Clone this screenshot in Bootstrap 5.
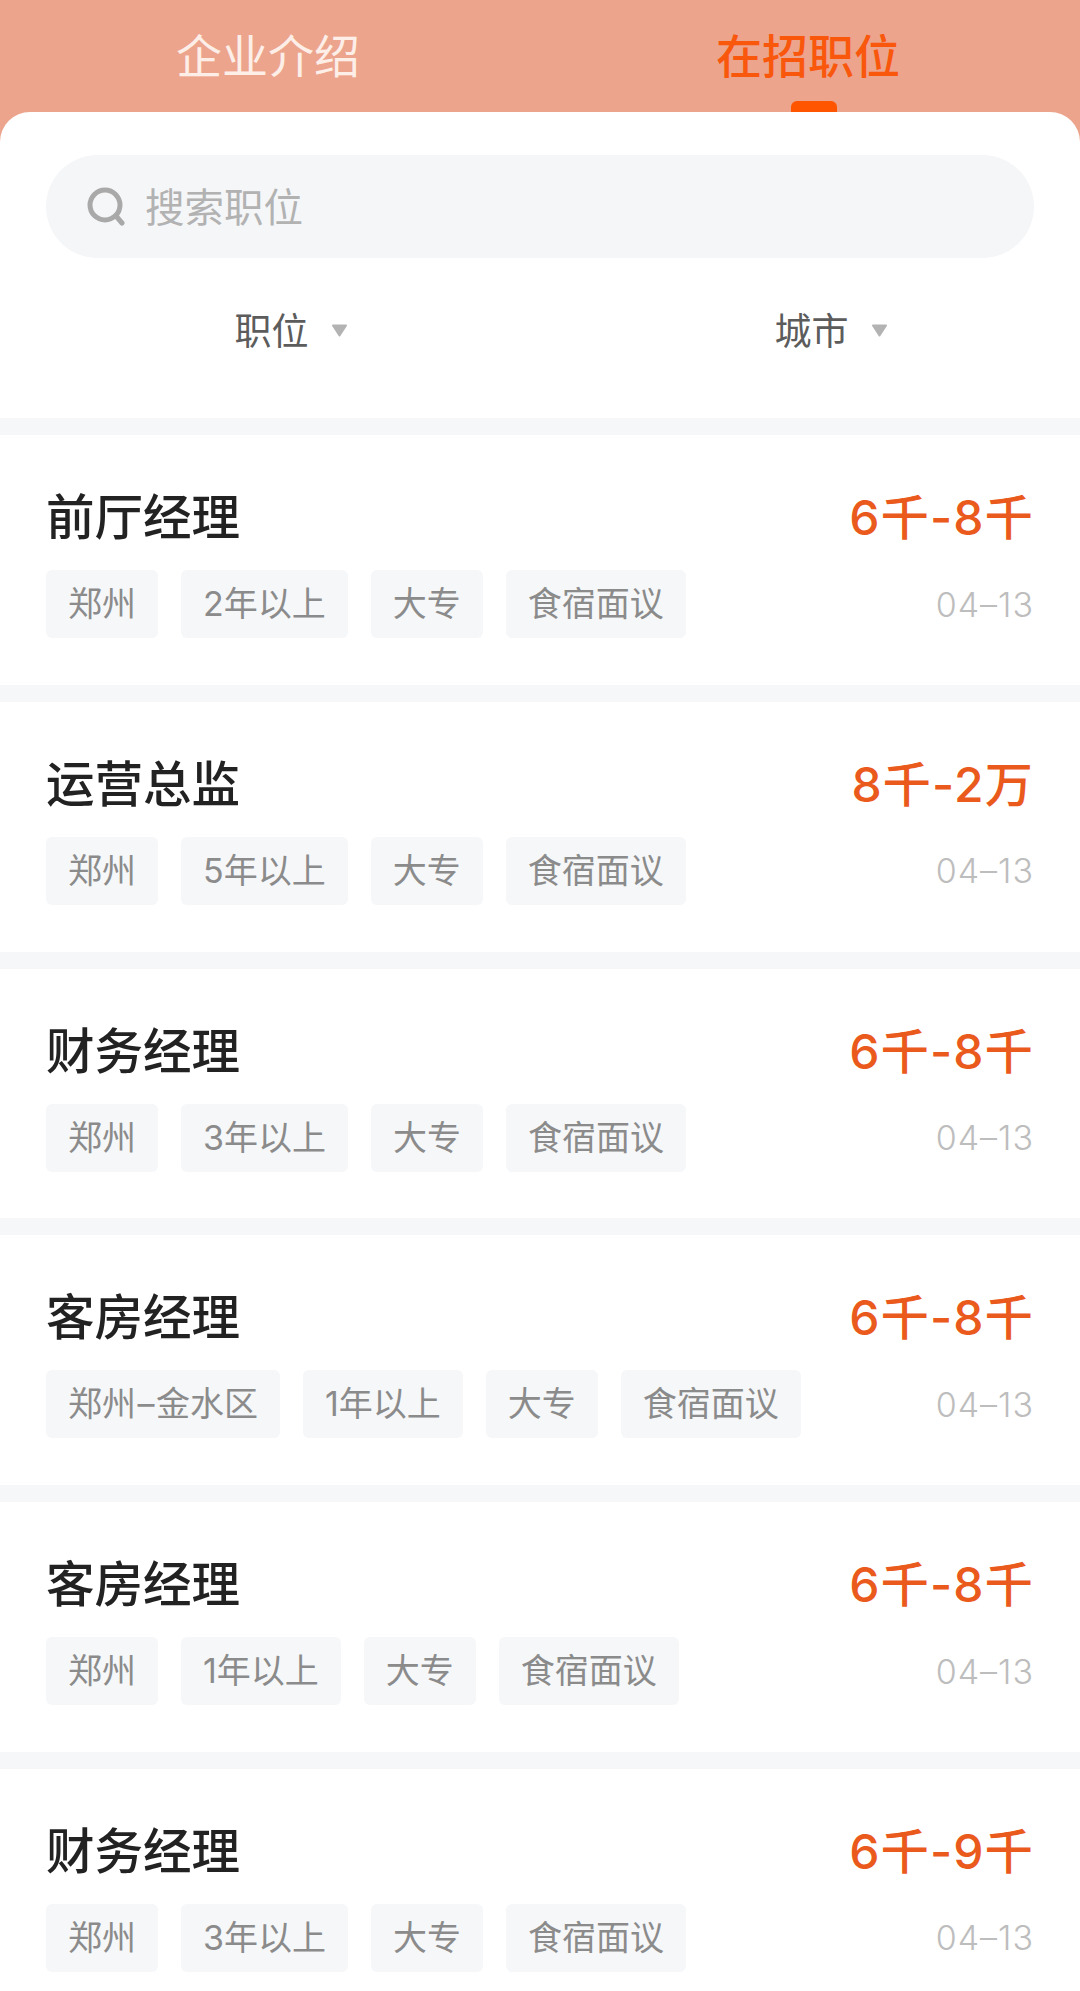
<!DOCTYPE html>
<html lang="zh">
<head>
<meta charset="utf-8">
<title>在招职位</title>
<link rel="stylesheet" href="https://cdn.jsdelivr.net/npm/bootstrap@5.3.0/dist/css/bootstrap.min.css">
<style>
html, body { height: 1991px; overflow: hidden; }
body { font-family: Inter, "Noto Sans CJK SC", sans-serif; background: #eca48c; }
.top-tabs { height: 112px; background: #eca48c; }
.tab-item { width: 540px; height: 112px; font-size: 46px; line-height: 113px; color: #fdeee8; text-align: center; position: relative; }
.tab-first { padding-right: 4px; }
.tab-on { color: #f9570c; font-weight: 500; padding-right: 4px; }
.tab-bar { position: absolute; left: 251px; bottom: 0; width: 46px; height: 11px; border-radius: 6px 6px 0 0; background: #ff5500; }
.sheet { background: #fff; border-radius: 30px 30px 0 0; height: 1879px; overflow: hidden; }
.head-zone { height: 306px; padding: 43px 46px 0; }
.search-pill { height: 103px; background: #f5f6f8; border-radius: 52px; padding-left: 41px; color: #b2b2b2; font-size: 39.5px; gap: 20px; }
.search-word { padding-top: 4px; }
.filter-row { height: 145px; margin: 0 -46px; }
.filter-col { width: 540px; padding-left: 42px; color: #5c5c5c; font-size: 37px; gap: 22px; }
.filter-word { padding-top: 2px; }
.caret-mark { width: 17px; height: 13px; }
.job-row { height: 266.8px; padding: 47px 46px 0; border-top: 17px solid #f6f7f9; background: #fff; box-sizing: border-box; }
.job-head { height: 68px; }
.job-name { font-size: 48.5px; line-height: 72px; height: 68px; color: #222; font-weight: 500; }
.job-pay { font-size: 48px; line-height: 72px; height: 68px; color: #ea5a1d; font-weight: 500; letter-spacing: 1.2px; }
.job-foot { margin-top: 20px; height: 68px; }
.chip-line { gap: 23px; }
.chip { height: 68px; line-height: 68px; padding: 0 22px; background: #f6f7f9; border-radius: 6px; color: #8b8b8b; font-size: 34px; white-space: nowrap; }
.chip-dash { padding: 0 1.5px; }
.job-date { color: #bdbdbd; font-size: 34px; font-weight: 300; letter-spacing: 1px; }
</style>
</head>
<body>
<div class="top-tabs d-flex">
  <div class="tab-item tab-first">企业介绍</div>
  <div class="tab-item tab-on">在招职位<span class="tab-bar"></span></div>
</div>
<div class="sheet">
  <div class="head-zone">
    <div class="search-pill d-flex align-items-center">
      <svg width="38" height="40" viewBox="0 0 38 40" fill="none" stroke="#a9a9a9" stroke-width="5" stroke-linecap="round"><circle cx="18" cy="18" r="15"/><path d="M29 29l6 7"/></svg>
      <span class="search-word">搜索职位</span>
    </div>
    <div class="filter-row d-flex">
      <div class="filter-col d-flex align-items-center justify-content-center">
        <span class="filter-word">职位</span>
        <svg class="caret-mark" viewBox="0 0 17 13"><path d="M2 1.5h13L8.5 11.5z" fill="#b3b3b3" stroke="#b3b3b3" stroke-width="2" stroke-linejoin="round"/></svg>
      </div>
      <div class="filter-col d-flex align-items-center justify-content-center">
        <span class="filter-word">城市</span>
        <svg class="caret-mark" viewBox="0 0 17 13"><path d="M2 1.5h13L8.5 11.5z" fill="#b3b3b3" stroke="#b3b3b3" stroke-width="2" stroke-linejoin="round"/></svg>
      </div>
    </div>
  </div>

  <div class="job-row">
    <div class="job-head d-flex justify-content-between"><span class="job-name">前厅经理</span><span class="job-pay">6千-8千</span></div>
    <div class="job-foot d-flex justify-content-between align-items-center">
      <div class="chip-line d-flex"><span class="chip">郑州</span><span class="chip">2年以上</span><span class="chip">大专</span><span class="chip">食宿面议</span></div>
      <span class="job-date">04–13</span>
    </div>
  </div>
  <div class="job-row">
    <div class="job-head d-flex justify-content-between"><span class="job-name">运营总监</span><span class="job-pay">8千-2万</span></div>
    <div class="job-foot d-flex justify-content-between align-items-center">
      <div class="chip-line d-flex"><span class="chip">郑州</span><span class="chip">5年以上</span><span class="chip">大专</span><span class="chip">食宿面议</span></div>
      <span class="job-date">04–13</span>
    </div>
  </div>
  <div class="job-row">
    <div class="job-head d-flex justify-content-between"><span class="job-name">财务经理</span><span class="job-pay">6千-8千</span></div>
    <div class="job-foot d-flex justify-content-between align-items-center">
      <div class="chip-line d-flex"><span class="chip">郑州</span><span class="chip">3年以上</span><span class="chip">大专</span><span class="chip">食宿面议</span></div>
      <span class="job-date">04–13</span>
    </div>
  </div>
  <div class="job-row">
    <div class="job-head d-flex justify-content-between"><span class="job-name">客房经理</span><span class="job-pay">6千-8千</span></div>
    <div class="job-foot d-flex justify-content-between align-items-center">
      <div class="chip-line d-flex"><span class="chip">郑州<span class="chip-dash">–</span>金水区</span><span class="chip">1年以上</span><span class="chip">大专</span><span class="chip">食宿面议</span></div>
      <span class="job-date">04–13</span>
    </div>
  </div>
  <div class="job-row">
    <div class="job-head d-flex justify-content-between"><span class="job-name">客房经理</span><span class="job-pay">6千-8千</span></div>
    <div class="job-foot d-flex justify-content-between align-items-center">
      <div class="chip-line d-flex"><span class="chip">郑州</span><span class="chip">1年以上</span><span class="chip">大专</span><span class="chip">食宿面议</span></div>
      <span class="job-date">04–13</span>
    </div>
  </div>
  <div class="job-row">
    <div class="job-head d-flex justify-content-between"><span class="job-name">财务经理</span><span class="job-pay">6千-9千</span></div>
    <div class="job-foot d-flex justify-content-between align-items-center">
      <div class="chip-line d-flex"><span class="chip">郑州</span><span class="chip">3年以上</span><span class="chip">大专</span><span class="chip">食宿面议</span></div>
      <span class="job-date">04–13</span>
    </div>
  </div>
</div>
<script src="https://cdn.jsdelivr.net/npm/bootstrap@5.3.0/dist/js/bootstrap.bundle.min.js"></script>
</body>
</html>
